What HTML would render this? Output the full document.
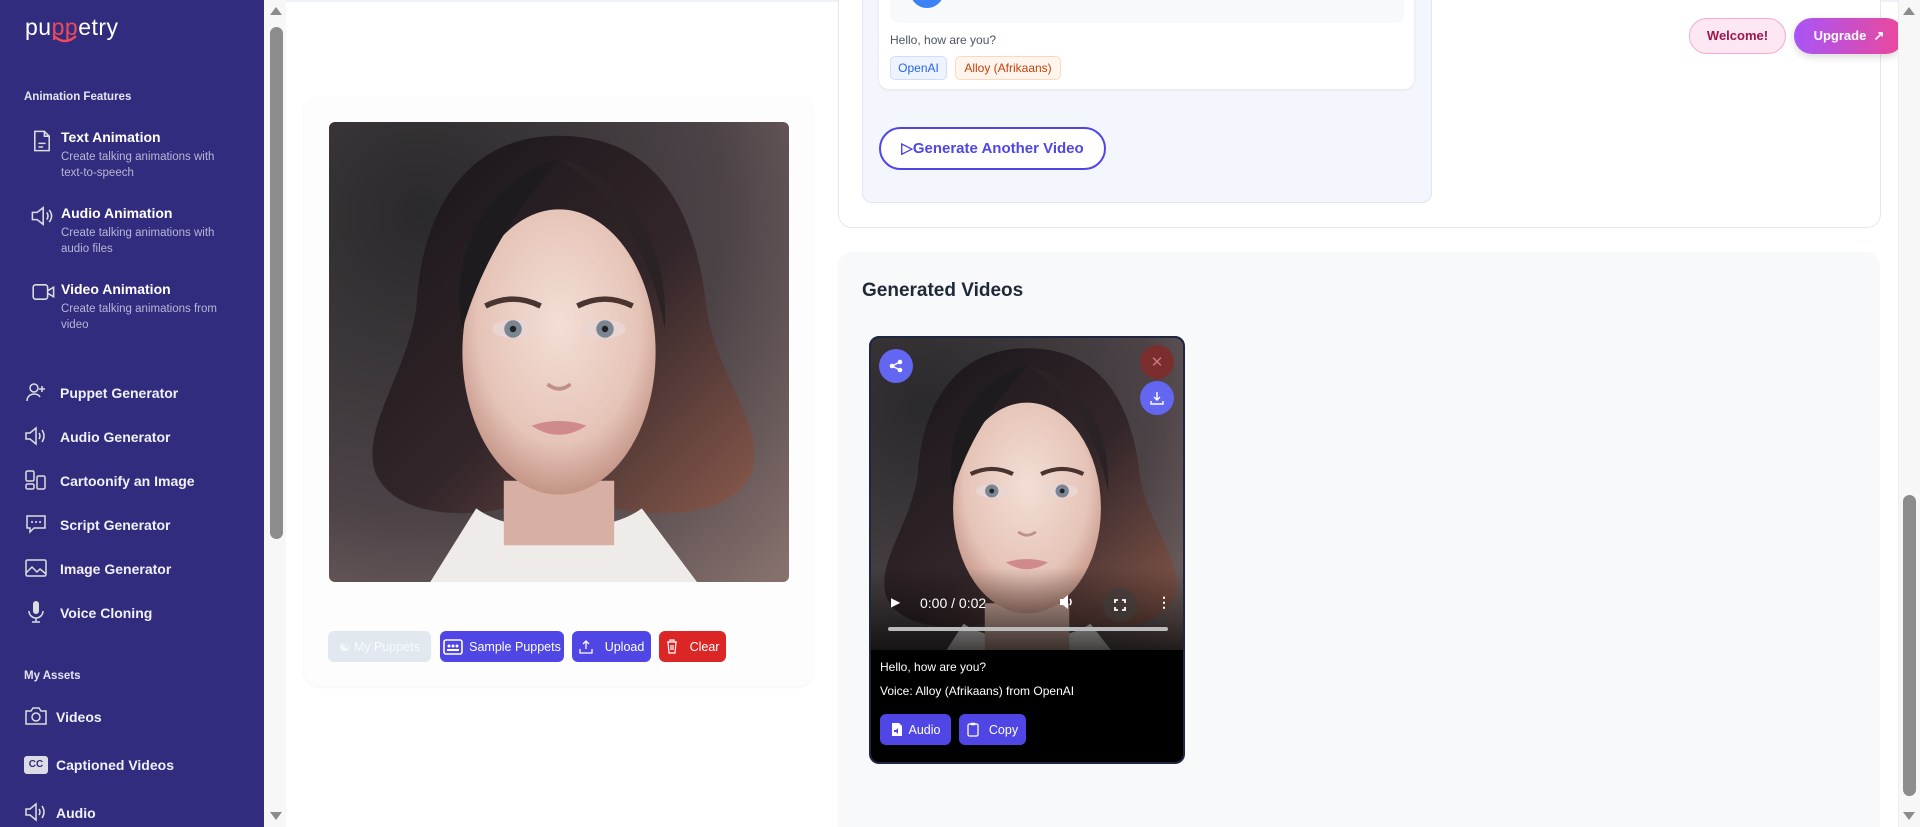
<!DOCTYPE html>
<html style="overflow:hidden;width:1920px;height:827px"><head><meta charset="utf-8"><style>
*{box-sizing:border-box;margin:0;padding:0}
body{width:1920px;height:827px;overflow:hidden;background:#fff;font-family:"Liberation Sans",sans-serif;position:relative}
.abs{position:absolute}
#side{left:0;top:0;width:264px;height:827px;background:#312c7e;color:#fff}
.sec{position:absolute;left:24px;font-size:11.5px;font-weight:bold;color:#e4e4f2}
.feat{position:absolute;left:61px;font-size:14px;font-weight:bold;color:#fff}
.fd{position:absolute;left:61px;font-size:11.5px;color:#b8b6d6;line-height:16px;width:175px}
.nav{position:absolute;left:60px;font-size:14px;font-weight:bold;color:#f0f0f8}
.ic{position:absolute;left:24px;width:24px;height:24px}
.btn{position:absolute;height:31px;border-radius:6px;color:#fff;font-size:12.5px;display:flex;align-items:center;justify-content:center;gap:6px}
.circ{position:absolute;width:34px;height:34px;border-radius:50%;display:flex;align-items:center;justify-content:center}
</style></head><body>
<svg width="0" height="0" style="position:absolute"><defs>
<radialGradient id="bg" cx="0.2" cy="0.2" r="1.1"><stop offset="0" stop-color="#2a292b"/><stop offset="0.6" stop-color="#4c4347"/><stop offset="1" stop-color="#85706c"/></radialGradient>
<radialGradient id="skin" cx="0.5" cy="0.4" r="0.6"><stop offset="0" stop-color="#f3ded6"/><stop offset="0.7" stop-color="#e6c4b8"/><stop offset="1" stop-color="#c39486"/></radialGradient>
<linearGradient id="hair" x1="0" y1="0" x2="1" y2="1"><stop offset="0" stop-color="#161418"/><stop offset="0.55" stop-color="#33262a"/><stop offset="1" stop-color="#8a5a4c"/></linearGradient>
<symbol id="face" viewBox="0 0 100 100" preserveAspectRatio="none">
<rect width="100" height="100" fill="url(#bg)"/>
<path d="M50 3 C28 3 20 22 19 40 C17 55 7 66 10 76 C14 86 30 86 38 84 L62 84 C72 86 88 86 92 76 C95 66 84 55 82 40 C80 22 73 3 50 3Z" fill="url(#hair)"/>
<path d="M22 100 L32 84 C40 90 60 90 68 84 L80 100Z" fill="#efebe8"/>
<path d="M38 78 L62 78 L62 92 L38 92Z" fill="#d7b0a3"/>
<ellipse cx="50" cy="50" rx="21" ry="31" fill="url(#skin)"/>
<path d="M50 8 C42 18 34 28 29 45 C26 30 33 13 50 8Z" fill="#1e1b1f"/>
<path d="M50 8 C62 16 70 28 73 45 C74 28 66 12 50 8Z" fill="#2a2224"/>
<path d="M34 40 Q40 37 46 40" stroke="#4a3430" stroke-width="1.2" fill="none"/>
<path d="M54 40 Q60 37 66 40" stroke="#4a3430" stroke-width="1.2" fill="none"/>
<ellipse cx="40" cy="45" rx="4.5" ry="2" fill="#e9d6d2"/><circle cx="40" cy="45" r="1.9" fill="#7a8694"/><circle cx="40" cy="45" r="0.7" fill="#222"/>
<ellipse cx="60" cy="45" rx="4.5" ry="2" fill="#e9d6d2"/><circle cx="60" cy="45" r="1.9" fill="#7a8694"/><circle cx="60" cy="45" r="0.7" fill="#222"/>
<path d="M47.5 57 Q50 59 52.5 57" stroke="#c09088" stroke-width="0.8" fill="none"/>
<path d="M44 66 Q50 64 56 66 Q50 70 44 66Z" fill="#d08a8c"/>
</symbol></defs></svg>

<div id="side" class="abs">
<div class="abs" style="left:25px;top:14px;font-size:23px;letter-spacing:0.5px;color:#fff">pu<span style="color:#ef4a5a">pp</span>etry</div>
<svg class="abs" style="left:52px;top:34px" width="26" height="10"><path d="M2 2 Q13 12 24 2" stroke="#ef4a5a" stroke-width="2.5" fill="none"/></svg>
<div class="sec" style="top:91px">Animation Features</div>
<svg class="ic" style="left:30px;top:129px" width="18" height="20" viewBox="0 0 18 20"><path d="M3 2h8l4 4v12H3z M11 2v4h4 M6 12h6 M6 15h4" stroke="#ddd" stroke-width="1.3" fill="none"/></svg>
<div class="feat" style="top:129px">Text Animation</div>
<div class="fd" style="top:149px">Create talking animations with text-to-speech</div>
<svg class="ic" style="left:30px;top:204px" width="20" height="18" viewBox="0 0 20 18"><path d="M2 6h4l5-4v14l-5-4H2z M14 6q2 3 0 6 M16 4q4 5 0 10" stroke="#ddd" stroke-width="1.3" fill="none"/></svg>
<div class="feat" style="top:205px">Audio Animation</div>
<div class="fd" style="top:225px">Create talking animations with audio files</div>
<svg class="ic" style="left:32px;top:280px" width="20" height="18" viewBox="0 0 20 18"><rect x="1" y="3" width="12" height="12" rx="2" stroke="#ddd" stroke-width="1.3" fill="none"/><path d="M13 8l5-3v8l-5-3" stroke="#ddd" stroke-width="1.3" fill="none"/></svg>
<div class="feat" style="top:281px">Video Animation</div>
<div class="fd" style="top:301px">Create talking animations from video</div>

<svg class="ic" style="top:380px" viewBox="0 0 24 24"><circle cx="10" cy="8" r="4" stroke="#ddd" stroke-width="1.5" fill="none"/><path d="M3 21c0-5 4-7 7-7s5 1 6 3 M18 6v6 M15 9h6" stroke="#ddd" stroke-width="1.5" fill="none"/></svg>
<div class="nav" style="top:385px">Puppet Generator</div>
<svg class="ic" style="top:424px" viewBox="0 0 24 24"><path d="M2 9h4l6-5v16l-6-5H2z M15 9q2 3 0 6 M18 6q4 6 0 12" stroke="#ddd" stroke-width="1.5" fill="none"/></svg>
<div class="nav" style="top:429px">Audio Generator</div>
<svg class="ic" style="top:468px" viewBox="0 0 24 24"><rect x="2" y="3" width="8" height="10" rx="1.5" stroke="#ddd" stroke-width="1.5" fill="none"/><rect x="2" y="16" width="8" height="5" rx="1.5" stroke="#ddd" stroke-width="1.5" fill="none"/><rect x="13" y="8" width="8" height="13" rx="1.5" stroke="#ddd" stroke-width="1.5" fill="none"/></svg>
<div class="nav" style="top:473px">Cartoonify an Image</div>
<svg class="ic" style="top:512px" viewBox="0 0 24 24"><path d="M3 4h18v12H10l-4 4v-4H3z" stroke="#ddd" stroke-width="1.5" fill="none"/><path d="M8 10h.1M12 10h.1M16 10h.1" stroke="#ddd" stroke-width="2" stroke-linecap="round"/></svg>
<div class="nav" style="top:517px">Script Generator</div>
<svg class="ic" style="top:556px" viewBox="0 0 24 24"><rect x="2" y="4" width="20" height="16" rx="1.5" stroke="#ddd" stroke-width="1.5" fill="none"/><path d="M2 17l6-6 5 5 3-3 6 5" stroke="#ddd" stroke-width="1.5" fill="none"/></svg>
<div class="nav" style="top:561px">Image Generator</div>
<svg class="ic" style="top:600px" viewBox="0 0 24 24"><rect x="9" y="1" width="6" height="13" rx="3" fill="#ddd"/><path d="M5 11a7 7 0 0 0 14 0 M12 18v4 M8 22h8" stroke="#ddd" stroke-width="1.5" fill="none"/></svg>
<div class="nav" style="top:605px">Voice Cloning</div>
<div class="sec" style="top:670px">My Assets</div>
<svg class="ic" style="top:703px" viewBox="0 0 24 24"><path d="M2 8h5l2-3h6l2 3h5v13H2z" stroke="#ddd" stroke-width="1.5" fill="none"/><circle cx="12" cy="14" r="4" stroke="#ddd" stroke-width="1.5" fill="none"/></svg>
<div class="nav" style="top:709px;left:56px">Videos</div>
<div class="abs" style="left:24px;top:756px;width:24px;height:18px;background:#dcdce6;border-radius:3px;color:#312c7e;font-size:10px;font-weight:bold;text-align:center;line-height:18px">CC</div>
<div class="nav" style="top:757px;left:56px">Captioned Videos</div>
<svg class="ic" style="top:800px" viewBox="0 0 24 24"><path d="M2 9h4l6-5v16l-6-5H2z M15 9q2 3 0 6 M18 6q4 6 0 12" stroke="#ddd" stroke-width="1.5" fill="none"/></svg>
<div class="nav" style="top:805px;left:56px">Audio</div>
</div>

<div class="abs" style="left:264px;top:0;width:22px;height:827px;background:#f7f7f7"></div>
<div class="abs" style="left:270px;top:27px;width:13px;height:512px;background:#8c8c8c;border-radius:7px"></div>
<div class="abs" style="left:270px;top:7px;width:0;height:0;border-left:6px solid transparent;border-right:6px solid transparent;border-bottom:8px solid #8c8c8c"></div>
<div class="abs" style="left:270px;top:812px;width:0;height:0;border-left:6px solid transparent;border-right:6px solid transparent;border-top:8px solid #8c8c8c"></div>

<div class="abs" style="left:286px;top:0;width:1612px;height:2px;background:#eef2f7"></div>

<div class="abs" style="left:304px;top:97px;width:509px;height:589px;background:#fdfdfe;border-radius:14px;box-shadow:0 1px 3px rgba(0,0,0,.05)"></div>
<svg class="abs" style="left:329px;top:122px;border-radius:6px" width="460" height="460"><use href="#face" width="460" height="460"/></svg>
<div class="btn" style="left:328px;top:631px;width:103px;background:#e2e8f0;color:#f8fafc">&#9775; My Puppets</div>
<div class="btn" style="left:440px;top:631px;width:124px;background:#4f46e5"><svg width="20" height="16" viewBox="0 0 20 16"><rect x="1" y="1" width="18" height="14" rx="2" stroke="#fff" stroke-width="1.6" fill="none"/><circle cx="6" cy="7" r="1.5" fill="#fff"/><circle cx="10" cy="7" r="1.5" fill="#fff"/><circle cx="14" cy="7" r="1.5" fill="#fff"/><rect x="4" y="10" width="12" height="2" fill="#fff"/></svg>Sample Puppets</div>
<div class="btn" style="left:572px;top:631px;width:79px;background:#4f46e5;gap:12px"><svg width="14" height="14" viewBox="0 0 14 14"><path d="M7 9V1 M4 4l3-3 3 3 M1 9v4h12V9" stroke="#fff" stroke-width="1.3" fill="none"/></svg>Upload</div>
<div class="btn" style="left:659px;top:631px;width:67px;background:#dc2626;gap:12px"><svg width="12" height="15" viewBox="0 0 12 15"><path d="M1 3h10 M4 3V1h4v2 M2 3l1 11h6l1-11 M5 6v5 M7 6v5" stroke="#fff" stroke-width="1.2" fill="none"/></svg>Clear</div>

<div class="abs" style="left:838px;top:-20px;width:1043px;height:248px;background:#fff;border:1px solid #e5e7eb;border-radius:14px"></div>
<div class="abs" style="left:862px;top:-20px;width:570px;height:223px;background:#f4f6fd;border:1px solid #dfe5f5;border-radius:10px"></div>
<div class="abs" style="left:879px;top:-20px;width:535px;height:109px;background:#fff;border-radius:10px;box-shadow:0 1px 3px rgba(0,0,0,.08)"></div>
<div class="abs" style="left:890px;top:-10px;width:514px;height:33px;background:#f8f9fb;border-radius:8px"></div>
<div class="abs" style="left:910px;top:-20px;width:34px;height:28px;background:#3b82f6;border-radius:0 0 17px 17px"></div>
<div class="abs" style="left:890px;top:33px;font-size:12px;color:#4b5563">Hello, how are you?</div>
<div class="abs" style="left:890px;top:56px;width:57px;height:24px;background:#eef4ff;border:1px solid #cfdcfb;border-radius:5px;color:#2563eb;font-size:12px;line-height:22px;text-align:center">OpenAI</div>
<div class="abs" style="left:955px;top:56px;width:106px;height:24px;background:#fff5ec;border:1px solid #fbd9bd;border-radius:5px;color:#c2410c;font-size:12px;line-height:22px;text-align:center">Alloy (Afrikaans)</div>
<div class="abs" style="left:879px;top:127px;width:227px;height:43px;border:2px solid #4f46e5;border-radius:22px;background:#fff;color:#4f46e5;font-size:15px;font-weight:bold;text-align:center;line-height:39px">&#9655;Generate Another Video</div>

<div class="abs" style="left:1689px;top:18px;width:97px;height:36px;background:#fce7f3;border:1px solid #f9a8d4;border-radius:18px;color:#9d174d;font-size:13px;font-weight:bold;text-align:center;line-height:34px">Welcome!</div>
<div class="abs" style="left:1794px;top:18px;width:110px;height:36px;background:linear-gradient(90deg,#a855f7,#ec4899);border-radius:18px;color:#fff;font-size:13px;font-weight:bold;text-align:center;line-height:36px;box-shadow:0 3px 8px rgba(0,0,0,.15)">Upgrade &nbsp;&#8599;</div>

<div class="abs" style="left:838px;top:252px;width:1042px;height:600px;background:#f8f9fb;border-radius:14px"></div>
<div class="abs" style="left:862px;top:280px;font-size:19px;font-weight:bold;color:#1f2937">Generated Videos</div>
<div class="abs" style="left:869px;top:336px;width:316px;height:428px;background:#000;border:2px solid #1e2640;border-radius:10px;overflow:hidden">
<svg class="abs" style="left:0;top:0" width="312" height="312"><use href="#face" x="-20" y="0" width="352" height="340"/></svg>
<div class="abs" style="left:0;top:230px;width:312px;height:90px;background:linear-gradient(rgba(0,0,0,0),rgba(0,0,0,.8))"></div>
<div class="abs" style="left:20px;top:257px;color:#fff;font-size:12px">&#9654;</div>
<div class="abs" style="left:49px;top:257px;color:#fff;font-size:14px">0:00 / 0:02</div>
<svg class="abs" style="left:188px;top:256px" width="16" height="16" viewBox="0 0 16 16"><path d="M1 5h3l5-4v14l-5-4H1z" fill="#fff"/><path d="M11 5q2 3 0 6" stroke="#fff" stroke-width="1.6" fill="none"/></svg>
<div class="abs" style="left:232px;top:250px;width:34px;height:34px;border-radius:50%;background:rgba(60,60,60,.6)"></div>
<svg class="abs" style="left:243px;top:261px" width="12" height="12" viewBox="0 0 12 12"><path d="M1 4V1h3 M8 1h3v3 M11 8v3H8 M4 11H1V8" stroke="#fff" stroke-width="1.8" fill="none"/></svg>
<div class="abs" style="left:286px;top:256px;color:#fff;font-size:14px;font-weight:bold">&#8942;</div>
<div class="abs" style="left:17px;top:289px;width:280px;height:4px;background:#bbb;border-radius:2px"></div>
<div class="abs" style="left:9px;top:322px;color:#fff;font-size:12px">Hello, how are you?</div>
<div class="abs" style="left:9px;top:346px;color:#fff;font-size:12px">Voice: Alloy (Afrikaans) from OpenAI</div>
<div class="btn" style="left:9px;top:376px;width:71px;background:#4f46e5;font-size:12.5px"><svg width="12" height="15" viewBox="0 0 12 15"><path d="M1 1h7l3 3v10H1z" fill="#fff"/><path d="M3 8h2l2-2v6l-2-2H3z" fill="#4f46e5"/></svg>Audio</div>
<div class="btn" style="left:88px;top:376px;width:67px;background:#4f46e5;gap:10px"><svg width="12" height="15" viewBox="0 0 12 15"><rect x="1" y="2" width="10" height="12" rx="1.5" stroke="#fff" stroke-width="1.3" fill="none"/><rect x="3.5" y="0.8" width="5" height="2.5" rx="0.8" fill="#fff"/></svg>Copy</div>
</div>
<div class="circ" style="left:879px;top:349px;background:#6366f1"><svg width="14" height="14" viewBox="0 0 14 14"><circle cx="11" cy="3" r="2.3" fill="#fff"/><circle cx="3" cy="7" r="2.3" fill="#fff"/><circle cx="11" cy="11" r="2.3" fill="#fff"/><path d="M3 7L11 3M3 7l8 4" stroke="#fff" stroke-width="1.5"/></svg></div>
<div class="circ" style="left:1140px;top:345px;background:#7a2e2e;color:#c77;font-size:15px">&#10005;</div>
<div class="circ" style="left:1140px;top:381px;background:#6366f1"><svg width="14" height="14" viewBox="0 0 14 14"><path d="M7 1v8 M4 6l3 3 3-3 M1 10v3h12v-3" stroke="#fff" stroke-width="1.4" fill="none"/></svg></div>

<div class="abs" style="left:1898px;top:0;width:22px;height:827px;background:#f7f7f7;border-left:1px solid #eee"></div>
<div class="abs" style="left:1903px;top:495px;width:13px;height:301px;background:#8c8c8c;border-radius:7px"></div>
<div class="abs" style="left:1903px;top:7px;width:0;height:0;border-left:6px solid transparent;border-right:6px solid transparent;border-bottom:8px solid #8c8c8c"></div>
<div class="abs" style="left:1903px;top:812px;width:0;height:0;border-left:6px solid transparent;border-right:6px solid transparent;border-top:8px solid #8c8c8c"></div>
</body></html>
